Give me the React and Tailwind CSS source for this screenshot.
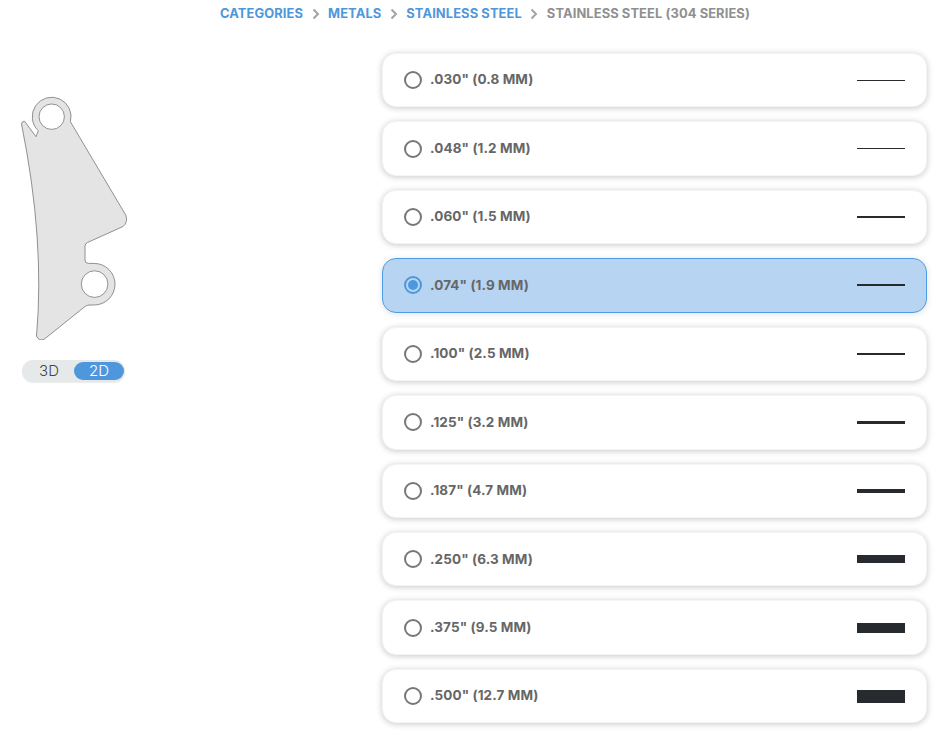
const rows = [
  ['.030" (0.8 MM)', 'h-px'],
  ['.048" (1.2 MM)', 'h-px'],
  ['.060" (1.5 MM)', 'h-[2px]'],
  ['.074" (1.9 MM)', 'h-[2px]', true],
  ['.100" (2.5 MM)', 'h-[2px]'],
  ['.125" (3.2 MM)', 'h-[3px]'],
  ['.187" (4.7 MM)', 'h-[4px]'],
  ['.250" (6.3 MM)', 'h-[8px]'],
  ['.375" (9.5 MM)', 'h-[10px]'],
  ['.500" (12.7 MM)', 'h-[13px]'],
];

function Chevron() {
  return (
    <svg width="8" height="12" viewBox="0 0 8 12" className="mx-[8.500px]" fill="none" stroke="#a3a3a3" strokeWidth="2">
      <path d="M1.500 1.500 6 6l-4.500 4.500" />
    </svg>
  );
}

function Part() {
  return (
    <svg width="150" height="260" viewBox="0 80 150 260" className="block">
      <path
        fillRule="evenodd"
        fill="#e4e4e4"
        stroke="#777"
        strokeWidth="0.8"
        d="M21.500 124 Q21.500 121.500 24.500 121.200 L36 136.700 L38.300 130.700 A19.400 19.400 0 1 1 70.400 121.700 L126 215.500 Q128 222.500 123 226.500 L87.500 242.500 Q85 243.500 85 246 L85 260 Q85 263.400 88.500 263.400 L94.200 263.400 A20.800 20.800 0 1 1 94.200 305 L90 305 Q87 305 85 306.500 L44.500 339 Q39 342 36.500 336 Q45 240 21.500 124 Z
           M39 116.700 A12.700 12.700 0 1 0 64.400 116.700 A12.700 12.700 0 1 0 39 116.700 Z
           M81.300 284.100 A13.300 13.300 0 1 0 107.900 284.100 A13.300 13.300 0 1 0 81.300 284.100 Z"
      />
    </svg>
  );
}

export default function App() {
  return (
    <div className="w-[937px] h-[749px] overflow-hidden bg-white font-['Inter',sans-serif]">
      <nav className="h-[52.900px] pl-[220px] pt-[6px] flex items-start">
        <div className="flex items-center h-[16px] text-[12.900px] font-bold tracking-[0.1px] text-[#4f97dc]">
          <span>CATEGORIES</span>
          <Chevron />
          <span>METALS</span>
          <Chevron />
          <span>STAINLESS STEEL</span>
          <Chevron />
          <span className="text-[#8f8f8f]">STAINLESS STEEL (304 SERIES)</span>
        </div>
      </nav>
      <div className="flex">
        <aside className="w-[382px] shrink-0 pt-[27.100px]">
          <Part />
          <div className="ml-[22px] mt-[20px] w-[103px] h-[22px] rounded-full bg-[#e6e9ea] flex items-center pl-[2px] pr-px shadow-[0_1px_1px_rgba(0,0,0,0.08)] text-[15px] font-light">
            <span className="w-[50px] text-center text-[#444]">3D</span>
            <span className="w-[50px] h-[18px] rounded-full bg-[#4f97dc] text-white flex items-center justify-center">2D</span>
          </div>
        </aside>
        <main className="w-[545px] flex flex-col gap-[14px]">
          {rows.map(([label, h, on]) => (
            <div
              key={label}
              className={
                on
                  ? 'h-[54.440px] rounded-[14px] border border-[#4f9ce6] bg-[#b7d5f2] flex items-center pl-[21px] pr-[21px] shadow-[0_1px_6px_rgba(0,0,0,0.12)]'
                  : 'h-[54.440px] rounded-[14px] border border-[#f4f4f4] bg-white flex items-center pl-[21px] pr-[21px] shadow-[0_1px_6px_rgba(0,0,0,0.22)]'
              }
            >
              {on ? (
                <span className="w-[18px] h-[18px] rounded-full border-2 border-[#4f97dc] flex items-center justify-center shrink-0">
                  <span className="w-[10px] h-[10px] rounded-full bg-[#4f97dc]" />
                </span>
              ) : (
                <span className="w-[18px] h-[18px] rounded-full border-2 border-[#777] shrink-0" />
              )}
              <span className="ml-[8px] -mt-px text-[13.500px] font-bold text-[#666] tracking-[0.1px]">{label}</span>
              <span className={'ml-auto w-[48px] bg-[#272a2e] ' + h} />
            </div>
          ))}
        </main>
      </div>
    </div>
  );
}
